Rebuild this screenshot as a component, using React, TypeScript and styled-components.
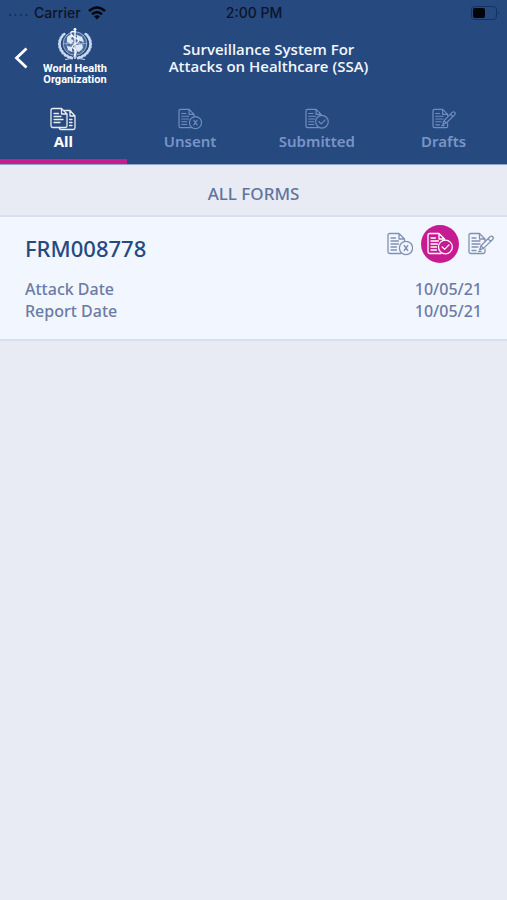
import React, { useState } from 'react';
import styled, { createGlobalStyle } from 'styled-components';

const GlobalStyle = createGlobalStyle`
  * { box-sizing: border-box; }
  body {
    margin: 0;
    background: #e8ebf4;
    font-family: "Noto Sans", "Open Sans", sans-serif;
  }
  button { font: inherit; border: 0; padding: 0; background: none; cursor: pointer; }
  h1, h2, h3, dl, dd, dt, p { margin: 0; font: inherit; }
  svg { display: block; }
`;

const Page = styled.div`
  min-height: 100vh;
  background: #e8ebf4;
`;

const Header = styled.header`
  background: #26497f;
  border-bottom: 1px solid #8fa5c9;
`;

const StatusBar = styled.div`
  display: grid;
  grid-template-columns: 1fr auto 1fr;
  align-items: center;
  height: 26px;
  padding: 0 7px 0 8px;
  color: #0b1529;
  font: 500 14px/26px Inter, Roboto, sans-serif;
`;

const Carrier = styled.div`
  display: flex;
  align-items: center;
  gap: 6px;
`;

const Battery = styled.div`
  justify-self: end;
`;

const NavBar = styled.div`
  display: grid;
  grid-template-columns: 112px 1fr 82px;
  align-items: start;
  height: 70px;
`;

const Brand = styled.div`
  display: flex;
  align-items: start;
`;

const BackButton = styled.button`
  width: 40px;
  padding: 20px 0 0 14px;
`;

const Logo = styled.div`
  display: flex;
  flex-direction: column;
  align-items: center;
  width: 70px;
  padding-top: 1px;
  color: #fff;
`;

const Wordmark = styled.div`
  padding-top: 1px;
  font-family: Roboto, "Noto Sans", sans-serif;
  font-size: 11px;
  font-weight: 700;
  line-height: 11px;
  text-align: center;
  white-space: nowrap;
`;

const Title = styled.h1`
  padding-top: 15px;
  color: #f2f6fd;
  font-family: "Open Sans", "Noto Sans", sans-serif;
  font-size: 15px;
  font-weight: 600;
  line-height: 17px;
  text-align: center;
  white-space: nowrap;
`;

const Tabs = styled.nav`
  display: grid;
  grid-template-columns: repeat(4, 1fr);
`;

const Tab = styled.button<{ $active: boolean }>`
  display: flex;
  flex-direction: column;
  align-items: center;
  height: 68px;
  padding-top: 11px;
  border-bottom: 5px solid ${p => (p.$active ? '#c71c91' : 'transparent')};
  color: ${p => (p.$active ? '#ffffff' : '#7995c7')};
  font-size: 15px;
  font-weight: ${p => (p.$active ? 700 : 600)};
  line-height: 22px;
`;

const TabIcon = styled.span`
  display: grid;
  place-items: center;
  height: 23px;
  opacity: 0.9;
`;

const SectionTitle = styled.h2`
  padding: 16px 0 9px;
  border-bottom: 2px solid #d9def0;
  color: #60739f;
  font-size: 17px;
  font-weight: 500;
  line-height: 25px;
  text-align: center;
`;

const Card = styled.article`
  padding: 8px 13px 17px 25px;
  background: #f2f6ff;
  border-bottom: 2px solid #d9def0;
`;

const CardHead = styled.div`
  display: flex;
  align-items: start;
  justify-content: space-between;
`;

const FormId = styled.h3`
  padding-top: 6px;
  color: #26497f;
  font-size: 22px;
  font-weight: 500;
  line-height: 34px;
`;

const Actions = styled.div`
  display: flex;
  align-items: center;
  gap: 8px;
  color: #8190b4;
`;

const IconButton = styled.button<{ $filled?: boolean }>`
  display: grid;
  place-items: center;
  width: ${p => (p.$filled ? '38px' : '27px')};
  height: ${p => (p.$filled ? '38px' : '27px')};
  border-radius: 50%;
  color: ${p => (p.$filled ? '#ffffff' : 'inherit')};
  background: ${p => (p.$filled ? '#c71c91' : 'none')};
`;

const Details = styled.dl`
  padding: 13px 12px 0 0;
  color: #6b7ba6;
  font-size: 16px;
  font-weight: 500;
  line-height: 22px;
`;

const Detail = styled.div`
  display: flex;
  justify-content: space-between;
`;

type Kind = 'all' | 'unsent' | 'submitted' | 'drafts';

function FormIcon({ kind, width = 26 }: { kind: Kind; width?: number }) {
  return (
    <svg width={width} height={Math.round((width * 24) / 26)} viewBox="0 0 26 24" fill="none"
      stroke="currentColor" strokeWidth="1.3" strokeLinecap="round" strokeLinejoin="round" aria-hidden="true">
      {kind === 'all' && (
        <>
          <path d="M11.5 1.5H2.7Q1 1.5 1 3.2V18.8Q1 20.5 2.7 20.5H15.3Q17 20.5 17 18.8V7ZM11.5 1.5V7H17" />
          <path d="M4 6.5H8.5M4 9.5H11M4 12.5H13M4 15.5H10" />
          <path d="M14.5 3.5H20L25 9V20.8Q25 22.5 23.3 22.5H11Q9.3 22.5 9.3 20.5M20 3.5V9H25M19.5 12.5H22M19.5 15.5H22M19.5 18.5H22" />
        </>
      )}
      {kind === 'unsent' && (
        <>
          <path d="M17.5 9V7L12 1.5H2.7Q1 1.5 1 3.2V19.8Q1 21.5 2.7 21.5H14M12 1.5V7H17.5" />
          <path d="M4 6H8.5M4 9H11.5M4 12H11.5M4 15H9.5M4 18H9.5" />
          <circle cx="19" cy="16" r="6.6" />
          <path d="M17.2 13.5L20.8 18.5M20.8 13.5L17.2 18.5" />
        </>
      )}
      {kind === 'submitted' && (
        <>
          <path d="M17.5 8V7L12 1.5H2.7Q1 1.5 1 3.2V19.8Q1 21.5 2.7 21.5H14M12 1.5V7H17.5" />
          <path d="M4 6H8.5M4 9H11.5M4 12H10.5M4 15H9.5M4 18H9.5" />
          <circle cx="18.4" cy="15" r="6.9" />
          <path d="M15.2 15L17.6 17.4L22 12.9" />
        </>
      )}
      {kind === 'drafts' && (
        <>
          <path d="M17 9V7L11.5 1.5H2.7Q1 1.5 1 3.2V19.8Q1 21.5 2.7 21.5H15.3Q17 21.5 17 19.8V17M11.5 1.5V7H17" />
          <path d="M4 6H8M4 9H12M4 12H12M4 15H10M4 18.5H8" />
          <path d="M22 4.8Q23.4 3.4 24.7 4.8Q26 6.2 24.6 7.5L15.5 16.4L11.7 17.8L13 13.8ZM20 6.8L22.7 9.4M13 13.8L15.5 16.4M10.5 19.3H13" />
        </>
      )}
    </svg>
  );
}

const leafAngles = [105, 118, 131, 144, 157, 170, 183, 196, 209, 222];

function Emblem() {
  return (
    <svg width="38" height="35" viewBox="0 0 38 35" fill="none" stroke="#c3d3ea" strokeWidth="0.7" aria-hidden="true">
      <circle cx="19" cy="16.5" r="11.8" fill="#48689b" />
      <circle cx="19" cy="16.5" r="8.2" strokeWidth="0.5" />
      <circle cx="19" cy="16.5" r="4.5" strokeWidth="0.5" />
      <path d="M7 16.5H31M10.5 8L27.5 25M27.5 8L10.5 25" strokeWidth="0.5" />
      <path d="M11 11Q13 7 17 8L15 12L18 14L15 17L11 15ZM21 8L26 10L28 15L24 14L21 12ZM20 18L26 17L27 21L23 25L20 23ZM11 19L16 20L16 25L12 23Z" fill="#dde8f7" stroke="none" />
      <path d="M19 3V32" strokeWidth="1.3" stroke="#fff" />
      <circle cx="19" cy="2.3" r="1.4" fill="#fff" stroke="none" />
      <path d="M20 5Q14 3 15 7Q16 10 20 11Q25 13 21 16Q15 18 17 21Q21 23 20 26Q18 28 19 30" strokeWidth="1.1" stroke="#fff" />
      <path d="M9 32.5Q15 32.5 19 29Q23 32.5 29 32.5" strokeWidth="1" />
      <g fill="#c9d8ee" stroke="none">
        {leafAngles.map(angle => {
          const a = (angle * Math.PI) / 180;
          const x = 15.5 * Math.cos(a);
          const y = 17 + 14 * Math.sin(a);
          return (
            <g key={angle}>
              <ellipse cx={19 + x} cy={y} rx="1.4" ry="2.4" transform={`rotate(${angle - 160} ${19 + x} ${y})`} />
              <ellipse cx={19 - x} cy={y} rx="1.4" ry="2.4" transform={`rotate(${160 - angle} ${19 - x} ${y})`} />
            </g>
          );
        })}
      </g>
    </svg>
  );
}

const tabs: { kind: Kind; label: string }[] = [
  { kind: 'all', label: 'All' },
  { kind: 'unsent', label: 'Unsent' },
  { kind: 'submitted', label: 'Submitted' },
  { kind: 'drafts', label: 'Drafts' },
];

export default function App() {
  const [active, setActive] = useState<Kind>('all');
  return (
    <Page>
      <GlobalStyle />
      <Header>
        <StatusBar>
          <Carrier>
            <svg width="20" height="6" viewBox="0 0 20 6" fill="#152d55" aria-hidden="true">
              <circle cx="2" cy="5" r="1" /><circle cx="7.5" cy="5" r="1" />
              <circle cx="13" cy="5" r="1" /><circle cx="18.5" cy="5" r="1" />
            </svg>
            <span>Carrier</span>
            <svg width="20" height="14" viewBox="0 0 18 14" fill="none" stroke="#000712" strokeWidth="2.5" aria-hidden="true">
              <path d="M1 5Q9-2 17 5M4 8.3Q9 4 14 8.3" />
              <path d="M6 10.3Q9 8 12 10.3L9 13.5Z" fill="#000712" stroke="none" />
            </svg>
          </Carrier>
          <span>2:00 PM</span>
          <Battery>
            <svg width="29" height="14" viewBox="0 0 29 14" aria-hidden="true">
              <rect x="0.5" y="0.5" width="25" height="13" rx="3" fill="none" stroke="#17315e" />
              <rect x="2" y="2" width="12" height="10" rx="2" fill="#00040c" />
              <path d="M27 5Q29 7 27 9Z" fill="#17315e" />
            </svg>
          </Battery>
        </StatusBar>
        <NavBar>
          <Brand>
            <BackButton aria-label="Back">
              <svg width="14" height="24" viewBox="0 0 14 24" fill="none" stroke="#fff" strokeWidth="2.8" aria-hidden="true">
                <path d="M12.5 2.5L2.5 12L12.5 21.5" />
              </svg>
            </BackButton>
            <Logo>
              <Emblem />
              <Wordmark>World Health<br />Organization</Wordmark>
            </Logo>
          </Brand>
          <Title>Surveillance System For<br />Attacks on Healthcare (SSA)</Title>
        </NavBar>
        <Tabs>
          {tabs.map(t => (
            <Tab key={t.kind} $active={active === t.kind} onClick={() => setActive(t.kind)}>
              <TabIcon><FormIcon kind={t.kind} width={t.kind === 'all' ? 26 : 24} /></TabIcon>
              {t.label}
            </Tab>
          ))}
        </Tabs>
      </Header>
      <main>
        <SectionTitle>ALL FORMS</SectionTitle>
        <Card>
          <CardHead>
            <FormId>FRM008778</FormId>
            <Actions>
              <IconButton aria-label="Unsent"><FormIcon kind="unsent" /></IconButton>
              <IconButton aria-label="Submitted" $filled><FormIcon kind="submitted" /></IconButton>
              <IconButton aria-label="Draft"><FormIcon kind="drafts" /></IconButton>
            </Actions>
          </CardHead>
          <Details>
            <Detail><dt>Attack Date</dt><dd>10/05/21</dd></Detail>
            <Detail><dt>Report Date</dt><dd>10/05/21</dd></Detail>
          </Details>
        </Card>
      </main>
    </Page>
  );
}
